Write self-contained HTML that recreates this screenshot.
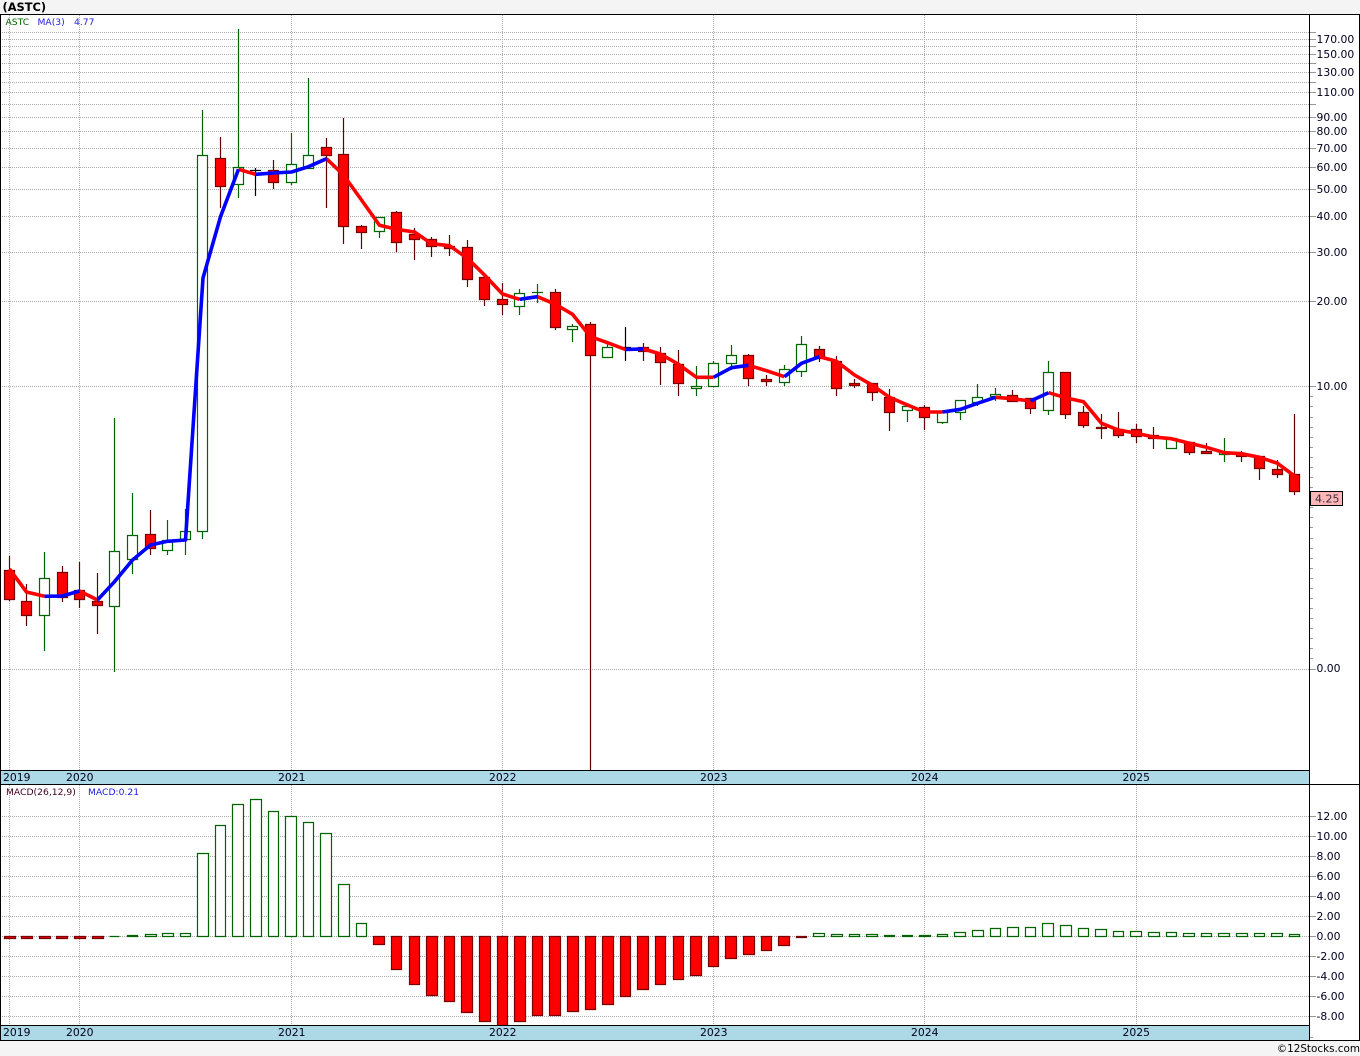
<!DOCTYPE html>
<html lang="en">
<head>
<meta charset="utf-8">
<title>(ASTC) Chart</title>
<style>
html,body{margin:0;padding:0;background:#f4f4f4;width:1360px;height:1056px;overflow:hidden}
svg{display:block}
text{font-family:"DejaVu Sans","Liberation Sans",sans-serif;font-size:10.8px;fill:#000020}
.s{font-size:9.2px}
.c{shape-rendering:crispEdges}
</style>
</head>
<body>
<svg width="1360" height="1056" viewBox="0 0 1360 1056" xmlns="http://www.w3.org/2000/svg">
<rect width="1360" height="1056" fill="#f4f4f4"/>
<rect x="0" y="14" width="1360" height="1027" fill="#fff"/>

<!-- grid -->
<g class="c" fill="none" stroke="#aaa" stroke-width="1" stroke-dasharray="1 1">
<path d="M2 32.5H1309M2 39.5H1309M2 46.5H1309M2 54.5H1309M2 63.5H1309M2 72.5H1309M2 82.5H1309M2 92.5H1309M2 104.5H1309M2 117.5H1309M2 131.5H1309M2 148.5H1309M2 167.5H1309M2 189.5H1309M2 216.5H1309M2 252.5H1309M2 301.5H1309M2 386.5H1309M2 669.5H1309"/>
<path d="M2 816.5H1309M2 836.5H1309M2 856.5H1309M2 876.5H1309M2 896.5H1309M2 916.5H1309M2 936.5H1309M2 956.5H1309M2 976.5H1309M2 996.5H1309M2 1016.5H1309"/>
<path d="M9.5 15V770M79.5 15V770M291.5 15V770M502.5 15V770M713.5 15V770M924.5 15V770M1136.5 15V770"/>
<path d="M9.5 785V1025M79.5 785V1025M291.5 785V1025M502.5 785V1025M713.5 785V1025M924.5 785V1025M1136.5 785V1025"/>
</g>

<!-- axis ticks -->
<g class="c" fill="none" stroke="#999" stroke-width="1">
<path d="M1310 32.5H1316M1310 39.5H1316M1310 46.5H1316M1310 54.5H1316M1310 63.5H1316M1310 72.5H1316M1310 82.5H1316M1310 92.5H1316M1310 104.5H1316M1310 117.5H1316M1310 131.5H1316M1310 148.5H1316M1310 167.5H1316M1310 189.5H1316M1310 216.5H1316M1310 252.5H1316M1310 301.5H1316M1310 386.5H1316M1310 669.5H1316"/>
<path d="M1310 816.5H1316M1310 836.5H1316M1310 856.5H1316M1310 876.5H1316M1310 896.5H1316M1310 916.5H1316M1310 936.5H1316M1310 956.5H1316M1310 976.5H1316M1310 996.5H1316M1310 1016.5H1316"/>
<path d="M1310 396.5H1313M1310 406.5H1313M1310 417.5H1313M1310 427.5H1313M1310 437.5H1313M1310 447.5H1313M1310 457.5H1313M1310 467.5H1313M1310 477.5H1313M1310 487.5H1313M1310 497.5H1313M1310 507.5H1313M1310 517.5H1313M1310 527.5H1313M1310 538.5H1313M1310 548.5H1313M1310 558.5H1313M1310 568.5H1313M1310 578.5H1313M1310 588.5H1313M1310 598.5H1313M1310 608.5H1313M1310 618.5H1313M1310 628.5H1313M1310 638.5H1313M1310 648.5H1313M1310 658.5H1313M1310 1037.5H1313"/>
</g>

<!-- wicks -->
<g fill="none" stroke-width="1.2">
<path stroke="#5f0000" d="M9.5 556V601M26.5 584V626M62.5 566V602M79.5 562V608M97.5 573V634M150.5 510V555M220.5 137V208M273.5 160V189M326.5 138V208M343.5 118V244M361.5 225V249M396.5 211V252M414.5 228V260M431.5 237V257M449.5 235V256M467.5 240V287M484.5 277V306M502.5 283V315M555.5 289V330M590.5 322V770M643.5 343V361M660.5 347V385M678.5 350V396M748.5 354V386M766.5 375V386M819.5 346V362M836.5 356V396M854.5 379V388M872.5 383V401M889.5 389V431M924.5 405V430M1012.5 390V401M1030.5 398V414M1065.5 372V419M1083.5 406V428M1101.5 414V439M1118.5 412V438M1136.5 424V443M1153.5 427V449M1189.5 442V455M1206.5 443V454M1241.5 451V462M1259.5 456V480M1277.5 460V478M1294.5 414V495"/>
<path stroke="#006400" d="M44.5 552V651M114.5 418V672M132.5 493V574M167.5 520V555M185.5 509V555M202.5 110V539M238.5 29V198M291.5 133V185M308.5 78V169M379.5 217V238M519.5 289V315M537.5 284V303M532 292.5H543M572.5 324V342M607.5 344V357M696.5 366V396M713.5 361V386M731.5 345V370M784.5 365V386M801.5 336V377M907.5 406V422M942.5 412V424M960.5 400V420M977.5 384V406M995.5 388V401M1048.5 361V415M1171.5 438V448M1224.5 438V462"/>
<path stroke="#000" d="M255.5 168V196M250 170.5H261M625.5 327V361M620 347.5H631"/>
</g>

<!-- candle bodies -->
<g stroke-width="1.2">
<path fill="#fff" stroke="#006400" d="M39.5 578.5h10v37h-10zM109.5 551.5h10v55h-10zM127.5 535.5h10v24h-10zM162.5 540.5h10v10h-10zM180.5 531.5h10v8h-10zM197.5 155.5h10v376h-10zM233.5 167.5h10v17h-10zM286.5 164.5h10v18h-10zM303.5 155.5h10v13h-10zM374.5 217.5h10v14h-10zM514.5 293.5h10v13h-10zM567.5 326.5h10v3h-10zM602.5 347.5h10v10h-10zM691.5 386.5h10v2h-10zM708.5 363.5h10v23h-10zM726.5 355.5h10v8h-10zM779.5 369.5h10v13h-10zM796.5 344.5h10v27h-10zM902.5 406.5h10v4h-10zM937.5 412.5h10v10h-10zM955.5 400.5h10v12h-10zM972.5 397.5h10v5h-10zM990.5 394.5h10v2h-10zM1043.5 372.5h10v38h-10zM1166.5 438.5h10v10h-10zM1219.5 452.5h10v2h-10z"/>
<path fill="#f00" stroke="#7a0000" d="M4.5 570.5h10v29h-10zM21.5 601.5h10v14h-10zM57.5 572.5h10v25h-10zM74.5 590.5h10v9h-10zM92.5 601.5h10v4h-10zM145.5 534.5h10v14h-10zM215.5 158.5h10v28h-10zM268.5 170.5h10v12h-10zM321.5 147.5h10v8h-10zM338.5 154.5h10v72h-10zM356.5 226.5h10v6h-10zM391.5 212.5h10v30h-10zM409.5 234.5h10v5h-10zM426.5 239.5h10v7h-10zM444.5 246.5h10v2h-10zM462.5 247.5h10v32h-10zM479.5 277.5h10v22h-10zM497.5 299.5h10v5h-10zM550.5 292.5h10v35h-10zM585.5 324.5h10v31h-10zM638.5 347.5h10v4h-10zM655.5 353.5h10v9h-10zM673.5 364.5h10v19h-10zM743.5 355.5h10v23h-10zM761.5 379.5h10v2h-10zM814.5 349.5h10v9h-10zM831.5 361.5h10v27h-10zM849.5 383.5h10v2h-10zM867.5 383.5h10v9h-10zM884.5 397.5h10v15h-10zM919.5 407.5h10v10h-10zM1007.5 395.5h10v6h-10zM1025.5 398.5h10v10h-10zM1060.5 372.5h10v42h-10zM1078.5 412.5h10v13h-10zM1096.5 427.5h10v1h-10zM1113.5 429.5h10v6h-10zM1131.5 429.5h10v7h-10zM1148.5 435.5h10v3h-10zM1184.5 442.5h10v10h-10zM1201.5 451.5h10v2h-10zM1236.5 454.5h10v2h-10zM1254.5 456.5h10v12h-10zM1272.5 469.5h10v5h-10zM1289.5 474.5h10v17h-10z"/>
</g>

<!-- moving average -->
<g fill="none" stroke-width="3.6" stroke-linejoin="round" stroke-linecap="butt">
<g stroke="#ff0000">
<polyline points="9.5,569 26.5,592 44.5,596.3"/>
<polyline points="79.5,591 97.5,600"/>
<polyline points="238.5,169.3 255.5,174.3"/>
<polyline points="326.5,158.7 343.5,175 361.5,200 379.5,225.3 396.5,229.3 414.5,232 431.5,243.7 449.5,245.7 467.5,258.3 484.5,275 502.5,294 519.5,299.3"/>
<polyline points="537.5,296.7 555.5,304.3 572.5,314.3 590.5,336.7 607.5,342.7 625.5,349.5"/>
<polyline points="643.5,349 660.5,354 678.5,364.3 696.5,377.3 713.5,377.3"/>
<polyline points="748.5,365.3 766.5,370.7 784.5,376.7"/>
<polyline points="819.5,356.7 836.5,361.3 854.5,375 872.5,385.3 889.5,397.3 907.5,405 924.5,412 942.5,412"/>
<polyline points="995.5,397.3 1012.5,398.7 1030.5,401"/>
<polyline points="1048.5,392.7 1065.5,397.7 1083.5,401.7 1101.5,423.3 1118.5,430 1136.5,433.3 1153.5,437 1171.5,438.7 1189.5,443.3 1206.5,447.3 1224.5,452.7 1241.5,453.7 1259.5,457.3 1277.5,463.3 1294.5,476"/>
</g>
<g stroke="#0000ff">
<polyline points="44.5,596.3 62.5,596 79.5,591"/>
<polyline points="97.5,600 114.5,581.7 132.5,560 150.5,545 167.5,541.3 185.5,540 203,278 220.5,216.7 238.5,169.3"/>
<polyline points="255.5,174.3 273.5,173 291.5,172 308.5,166.7 326.5,158.7"/>
<polyline points="519.5,299.3 537.5,296.7"/>
<polyline points="625.5,349.5 643.5,349"/>
<polyline points="713.5,377.3 731.5,367.7 748.5,365.3"/>
<polyline points="784.5,376.7 801.5,363.3 819.5,356.7"/>
<polyline points="942.5,412 960.5,409.3 977.5,403.3 995.5,397.3"/>
<polyline points="1030.5,401 1048.5,392.7"/>
</g>
</g>

<!-- MACD histogram -->
<g stroke-width="1.2">
<path fill="#fff" stroke="#006400" d="M109.5 936.5h10M127.5 935.5h10v1h-10zM145.5 934.5h11v2h-11zM162.5 933.5h11v3h-11zM180.5 933.5h10v3h-10zM197.5 853.5h11v83h-11zM215.5 825.5h10v111h-10zM232.5 804.5h11v132h-11zM250.5 799.5h11v137h-11zM268.5 811.5h10v125h-10zM285.5 816.5h11v120h-11zM303.5 822.5h10v114h-10zM320.5 833.5h11v103h-11zM338.5 884.5h11v52h-11zM356.5 923.5h10v13h-10zM813.5 933.5h11v3h-11zM831.5 934.5h11v2h-11zM849.5 934.5h10v2h-10zM866.5 934.5h11v2h-11zM884.5 935.5h10v1h-10zM902.5 935.5h10v1h-10zM919.5 935.5h11v1h-11zM937.5 934.5h10v2h-10zM954.5 932.5h11v4h-11zM972.5 930.5h11v6h-11zM990.5 928.5h10v8h-10zM1007.5 927.5h11v9h-11zM1025.5 927.5h10v9h-10zM1042.5 923.5h11v13h-11zM1060.5 925.5h11v11h-11zM1078.5 928.5h10v8h-10zM1095.5 929.5h11v7h-11zM1113.5 931.5h10v5h-10zM1130.5 931.5h11v5h-11zM1148.5 932.5h11v4h-11zM1166.5 932.5h10v4h-10zM1183.5 933.5h11v3h-11zM1201.5 933.5h10v3h-10zM1218.5 933.5h11v3h-11zM1236.5 933.5h11v3h-11zM1254.5 933.5h10v3h-10zM1271.5 933.5h11v3h-11zM1289.5 934.5h10v2h-10z"/>
<path fill="#f00" stroke="#7a0000" d="M4.5 936.5h11v2h-11zM21.5 936.5h11v2h-11zM39.5 936.5h11v2h-11zM56.5 936.5h11v2h-11zM74.5 936.5h11v2h-11zM92.5 936.5h11v2h-11zM373.5 936.5h11v8h-11zM391.5 936.5h10v33h-10zM409.5 936.5h10v48h-10zM426.5 936.5h11v59h-11zM444.5 936.5h10v65h-10zM461.5 936.5h11v76h-11zM479.5 936.5h11v85h-11zM497.5 936.5h10v89h-10zM514.5 936.5h11v85h-11zM532.5 936.5h10v79h-10zM549.5 936.5h11v79h-11zM567.5 936.5h11v75h-11zM585.5 936.5h10v73h-10zM602.5 936.5h11v68h-11zM620.5 936.5h10v60h-10zM637.5 936.5h11v53h-11zM655.5 936.5h10v48h-10zM673.5 936.5h10v43h-10zM690.5 936.5h11v39h-11zM708.5 936.5h10v30h-10zM725.5 936.5h11v22h-11zM743.5 936.5h11v18h-11zM761.5 936.5h10v14h-10zM778.5 936.5h11v9h-11zM796.5 936.5h10v1h-10z"/>
</g>

<!-- strips -->
<g class="c">
<rect x="1" y="771" width="1308" height="13" fill="#add8e6"/>
<rect x="1" y="1026" width="1308" height="14" fill="#add8e6"/>
<path fill="none" stroke="#000" stroke-width="1" d="M0 14.5H1360M0 770.5H1310M0 784.5H1360M0 1025.5H1310M0 1040.5H1360M0.5 14V1041M1309.5 14V1041M1359.5 14V1041"/>
</g>

<!-- price label box -->
<rect class="c" x="1310.5" y="491.5" width="32" height="14" fill="#ffb6b6" stroke="#000"/>

<!-- title and legends -->
<text x="2.5" y="11" style="font-size:11.4px;font-weight:bold;fill:#000">(ASTC)</text>
<text class="s" x="5.5" y="25" style="fill:#006400">ASTC</text>
<text class="s" x="37.5" y="25" style="fill:#2020e0">MA(3)</text>
<text class="s" x="74" y="25" style="fill:#2020e0">4.77</text>
<text class="s" x="6" y="795" style="fill:#400020">MACD(26,12,9)</text>
<text class="s" x="88" y="795" style="fill:#2020e0">MACD:0.21</text>

<!-- right labels top -->
<text x="1316.5" y="43">170.00</text>
<text x="1316.5" y="58">150.00</text>
<text x="1316.5" y="76">130.00</text>
<text x="1316.5" y="96">110.00</text>
<text x="1316.5" y="121">90.00</text>
<text x="1316.5" y="135">80.00</text>
<text x="1316.5" y="152">70.00</text>
<text x="1316.5" y="171">60.00</text>
<text x="1316.5" y="193">50.00</text>
<text x="1316.5" y="220">40.00</text>
<text x="1316.5" y="256">30.00</text>
<text x="1316.5" y="305">20.00</text>
<text x="1316.5" y="390">10.00</text>
<text x="1315" y="502.5" style="font-size:11px;fill:#303040">4.25</text>
<text x="1316.5" y="672">0.00</text>

<!-- right labels MACD -->
<text x="1316.5" y="820">12.00</text>
<text x="1316.5" y="840">10.00</text>
<text x="1316.5" y="860">8.00</text>
<text x="1316.5" y="880">6.00</text>
<text x="1316.5" y="900">4.00</text>
<text x="1316.5" y="920">2.00</text>
<text x="1316.5" y="940">0.00</text>
<text x="1316.5" y="960">-2.00</text>
<text x="1316.5" y="980">-4.00</text>
<text x="1316.5" y="1000">-6.00</text>
<text x="1316.5" y="1020">-8.00</text>

<!-- years -->
<text x="3" y="781">2019</text>
<text x="66" y="781">2020</text>
<text x="278" y="781">2021</text>
<text x="489" y="781">2022</text>
<text x="700" y="781">2023</text>
<text x="911" y="781">2024</text>
<text x="1122.5" y="781">2025</text>
<text x="3" y="1036">2019</text>
<text x="66" y="1036">2020</text>
<text x="278" y="1036">2021</text>
<text x="489" y="1036">2022</text>
<text x="700" y="1036">2023</text>
<text x="911" y="1036">2024</text>
<text x="1122.5" y="1036">2025</text>

<text x="1360" y="1052" text-anchor="end" style="font-size:10.4px;fill:#000">©12Stocks.com</text>
</svg>
</body>
</html>
